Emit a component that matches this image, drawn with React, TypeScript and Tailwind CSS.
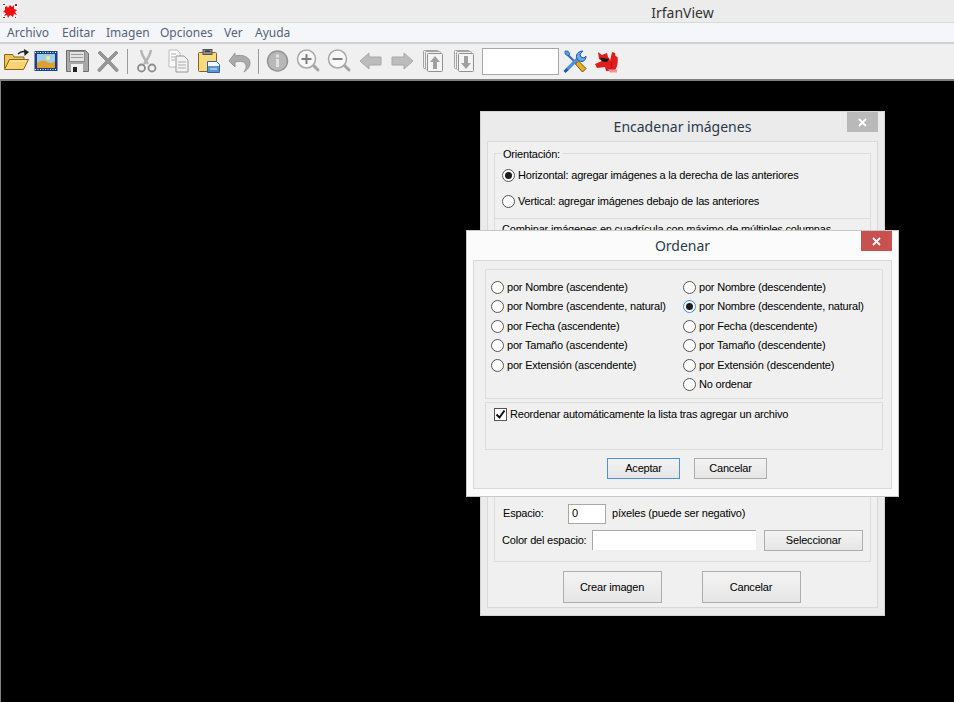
const SANS = "font-['Liberation_Sans',Arial,sans-serif]";

function Splat() {
  return (
    <svg width="16" height="16" viewBox="0 0 16 16">
      <rect width="16" height="16" fill="#f6f0f0" />
      <path d="M3 4 5 3 6 5 8 2 10 4 12 2 12 6 15 7 13 9 15 12 12 11 11 14 8 12 6 15 5 12 2 13 4 10 1 9 3 7Z" fill="#f01010" />
      <path d="M1 1h2v1H1zM13 1h2v2h-2zM1 14h2v1H1zM13 14h1v1h-1z" fill="#444" />
    </svg>
  );
}

const icons: Record<string, React.ReactNode> = {
  open: (
    <>
      <path d="M1.500 20V6.500h8l1.500 2.500h10v3H7L3 21Z" fill="#eec65e" stroke="#8a6414" />
      <path d="M6.500 11.500H25.500l-5 10H1.500Z" fill="#f8d273" stroke="#8a6414" />
      <path d="M7 13h16" stroke="#fff3c0" />
      <path d="M15 6c2-2 5-3 8-2" fill="none" stroke="#222" strokeWidth="1.500" />
      <path d="m21 1 5 3-4.500 4Z" fill="#222" />
    </>
  ),
  film: (
    <>
      <rect x="0.500" y="3" width="23" height="20" fill="#1d3f86" />
      <rect x="3" y="6" width="18" height="14" fill="#9fd0ea" />
      <path d="M3 15c4-3 7-3 10-1s5 1 8-1v7H3Z" fill="#e0a030" />
      <circle cx="14" cy="10" r="2" fill="#ffe98a" />
      <path d="M1 4.500h22M1 21.500h22" stroke="#fff" strokeDasharray="1 1.500" />
    </>
  ),
  save: (
    <>
      <path d="M1.500 2.500h19l3 3v18h-22Z" fill="#a8a8a8" stroke="#6e6e6e" />
      <rect x="4.500" y="3.500" width="15" height="10" fill="#e4e4e4" stroke="#8a8a8a" />
      <path d="M6 6.500h12M6 9.500h12" stroke="#9a9a9a" />
      <rect x="6" y="16" width="12" height="8" fill="#efefef" />
      <rect x="8" y="19" width="4" height="5" fill="#222" />
    </>
  ),
  del: (
    <path d="m2 5 2-2 8 8 8-8 2 2-8 8 8.500 9-2 2-8.500-9-8.500 9-2-2 8.500-9Z" fill="#979797" stroke="#7c7c7c" strokeWidth=".7" />
  ),
  cut: (
    <>
      <path d="M7 2c1 6 4 10 7 14M17 2c-1 6-4 10-7 14" stroke="#b4b4b4" strokeWidth="2.400" fill="none" />
      <circle cx="7.500" cy="20" r="3.500" fill="none" stroke="#8c8c8c" strokeWidth="1.800" />
      <circle cx="18" cy="20" r="3.500" fill="none" stroke="#8c8c8c" strokeWidth="1.800" />
    </>
  ),
  copy: (
    <>
      <path d="M4 2h8l3 3v14H4Z" fill="#fafafa" stroke="#bcbcbc" />
      <path d="M11 8h8l4 4v12H11Z" fill="#f2f2f2" stroke="#969696" />
      <path d="M6 6h5M6 9h4M6 12h4M13 14h8M13 17h8M13 20h8" stroke="#adadad" />
    </>
  ),
  paste: (
    <>
      <rect x="2.500" y="4.500" width="18" height="19" rx="1" fill="#f8dc7c" stroke="#8f5a2c" />
      <rect x="7" y="1.500" width="9" height="5" fill="#8a8a8a" stroke="#555" />
      <rect x="9" y="2.500" width="5" height="1.500" fill="#333" />
      <path d="M11.500 13.500h9l3 3v8h-12Z" fill="#f4f8fc" stroke="#2f62a8" />
      <path d="M12 18h11v6H12Z" fill="#5a96d2" />
      <path d="M14 21h7" stroke="#dfeefc" />
    </>
  ),
  undo: (
    <path d="M2 13 8 5v3c8-2 15 1 15 7 0 4-3 7-6 9 2-3 3-6 1-9-2-2-6-2-10-1v5Z" fill="#ababab" stroke="#979797" />
  ),
  info: (
    <>
      <circle cx="12.500" cy="13" r="10" fill="#b8b8b8" stroke="#959595" strokeWidth="1.500" />
      <rect x="11" y="11" width="3" height="8" fill="#e2e2e2" />
      <rect x="11" y="6.500" width="3" height="3" fill="#e2e2e2" />
    </>
  ),
  zoomin: (
    <>
      <path d="m17 17 5 5" stroke="#a4a4a4" strokeWidth="3" strokeLinecap="round" />
      <circle cx="10.500" cy="11" r="9" fill="#f8f8f8" stroke="#a8a8a8" strokeWidth="1.500" />
      <path d="M5.500 11h10M10.500 6v10" stroke="#7f7f7f" strokeWidth="2" />
    </>
  ),
  zoomout: (
    <>
      <path d="m17 17 5 5" stroke="#a4a4a4" strokeWidth="3" strokeLinecap="round" />
      <circle cx="10.500" cy="11" r="9" fill="#f8f8f8" stroke="#a8a8a8" strokeWidth="1.500" />
      <path d="M5.500 11h10" stroke="#7f7f7f" strokeWidth="2" />
    </>
  ),
  left: <path d="M2 13 11 5V9h12v8H11v4Z" fill="#bcbcbc" stroke="#a8a8a8" />,
  right: <path d="M24 13 15 5V9H3v8h12v4Z" fill="#bcbcbc" stroke="#a8a8a8" />,
  pgup: (
    <>
      <rect x="3.500" y="2.500" width="15" height="18" rx="1" fill="#f0f0f0" stroke="#a4a4a4" />
      <rect x="5.500" y="3.500" width="15" height="18" rx="1" fill="#f0f0f0" stroke="#a4a4a4" />
      <rect x="7.500" y="5.500" width="15" height="18" rx="1" fill="#f4f4f4" stroke="#909090" />
      <path d="m15 8 5 6h-3v7h-4v-7h-3Z" fill="#a0a0a0" />
    </>
  ),
  pgdn: (
    <>
      <rect x="3.500" y="2.500" width="15" height="18" rx="1" fill="#f0f0f0" stroke="#a4a4a4" />
      <rect x="5.500" y="3.500" width="15" height="18" rx="1" fill="#f0f0f0" stroke="#a4a4a4" />
      <rect x="7.500" y="5.500" width="15" height="18" rx="1" fill="#f4f4f4" stroke="#909090" />
      <path d="m15 21-5-6h3V8h4v7h3Z" fill="#a0a0a0" />
    </>
  ),
  tools: (
    <>
      <path d="M4 5 16 17" stroke="#2e6fc0" strokeWidth="2.200" fill="none" />
      <path d="M3 3h3l2 3-2 2-3-2Z" fill="#5b9ae0" stroke="#1d58a8" strokeWidth=".7" />
      <path d="M4.500 22 16 10.500" stroke="#4f8fdc" strokeWidth="3.200" fill="none" />
      <path d="M15 11c-2-4 1-8 6-8l-3 3 1 3 3 1 2-2c0 5-4 8-9 3" fill="#6aa6e8" stroke="#1d58a8" />
      <path d="m13.500 16 3-3 7.500 7.500-3.500 3.500Z" fill="#eab020" stroke="#6a5010" />
      <path d="m2.500 24 3-3" stroke="#1d58a8" strokeWidth="3" />
    </>
  ),
  devil: (
    <>
      <path d="M5 4 9 7l5-2 1 4c1 1 2 2 2 4l2-9 3 1 .5 3 2 1c1 6-1 12-3 14H13l-1-4-8 1-2-4 7-3-3-2Z" fill="#e21c1c" />
      <path d="M7 9.500 16 11l-2 3-5-.500Z" fill="#1a1a1a" />
      <path d="M15 21.500h9v3h-7Z" fill="#f09090" />
      <path d="M18 14c1 2 1 4 0 6" stroke="#a80f0f" fill="none" />
    </>
  ),
};

function Tool({ name }: { name: string }) {
  return (
    <div className="flex h-[34px] w-[31px] shrink-0 items-center justify-center">
      <svg width="26" height="26" viewBox="0 0 26 26">
        {icons[name]}
      </svg>
    </div>
  );
}

function Sep() {
  return (
    <div className="flex h-[34px] w-[7px] shrink-0 items-center justify-center">
      <div className="h-[25px] w-[1px] bg-[#9a9a9a]" />
    </div>
  );
}

function Radio({ label, checked, focus }: { label: string; checked?: boolean; focus?: boolean }) {
  return (
    <div className="flex items-center gap-[3px] text-[11px] leading-none tracking-[-0.2px] text-black">
      <span
        className={`flex h-[13px] w-[13px] shrink-0 items-center justify-center rounded-full border bg-white ${
          focus ? "border-[#3d8fe8]" : "border-[#555]"
        }`}
      >
        {checked && <span className="h-[7px] w-[7px] rounded-full bg-[#1c1c1c]" />}
      </span>
      <span className="whitespace-nowrap">{label}</span>
    </div>
  );
}

function Button({ label, className }: { label: string; className: string }) {
  return (
    <div
      className={`flex items-center justify-center border bg-gradient-to-b from-[#f3f3f3] to-[#e6e6e6] text-[11px] tracking-[-0.2px] text-black ${className}`}
    >
      {label}
    </div>
  );
}

export default function App() {
  return (
    <div className={`relative flex h-[702px] w-[954px] flex-col overflow-hidden bg-black ${SANS}`}>
      {/* Title bar */}
      <div className="relative flex h-[23px] shrink-0 items-center justify-center border-b border-[#d9d9d9] bg-[#ececec] pl-[411px] pt-[2px] font-['Noto_Sans',sans-serif] text-[14px] text-[#333]">
        <div className="absolute left-[2px] top-[3px]">
          <Splat />
        </div>
        IrfanView
      </div>

      {/* Menu */}
      <div className="flex h-[19px] shrink-0 items-center bg-[#f5f6f9] font-['Noto_Sans',sans-serif] text-[12px] text-[#55637a]">
        <span className="ml-[7px] w-[55px]">Archivo</span>
        <span className="w-[44px]">Editar</span>
        <span className="w-[54px]">Imagen</span>
        <span className="w-[64px]">Opciones</span>
        <span className="w-[31px]">Ver</span>
        <span>Ayuda</span>
      </div>

      {/* Toolbar */}
      <div className="flex h-[39px] shrink-0 items-center border-t-2 border-b-2 border-t-[#d0d0d0] border-b-[#808080] bg-[#f0f0f0] pb-[1px]">
        <Tool name="open" />
        <Tool name="film" />
        <Tool name="save" />
        <Tool name="del" />
        <Sep />
        <Tool name="cut" />
        <Tool name="copy" />
        <Tool name="paste" />
        <Tool name="undo" />
        <Sep />
        <Tool name="info" />
        <Tool name="zoomin" />
        <Tool name="zoomout" />
        <Tool name="left" />
        <Tool name="right" />
        <Tool name="pgup" />
        <Tool name="pgdn" />
        <div className="ml-[3px] h-[27px] w-[77px] shrink-0 border border-[#a8a8a8] bg-white" />
        <Tool name="tools" />
        <Tool name="devil" />
      </div>

      <div className="flex-1 border-l border-[#808080] bg-black" />

      {/* Encadenar imágenes */}
      <div className="absolute left-[480px] top-[111px] flex h-[505px] w-[405px] flex-col border border-[#d4d4d4] bg-[#ebebeb]">
        <div className="relative flex h-[29px] shrink-0 items-center justify-center font-['Noto_Sans',sans-serif] text-[14px] text-[#2b3a4a]">
          Encadenar imágenes
          <div className="absolute right-[6px] top-0 flex h-[20px] w-[31px] items-center justify-center bg-[#b9b9b9]">
            <svg width="9" height="9" viewBox="0 0 9 9">
              <path d="m1 1 7 7M8 1 1 8" stroke="#fff" strokeWidth="1.800" />
            </svg>
          </div>
        </div>
        <div className="mx-[6px] flex flex-1 flex-col border border-[#d9d9d9] bg-[#f0f0f0] px-[6px] pt-[11px]">
          <div className="relative h-[66px] shrink-0 border border-[#dcdcdc] px-[7px] pt-[15px]">
            <span className="absolute left-[6px] top-[-7px] bg-[#f0f0f0] px-[2px] text-[11px] leading-[14px] tracking-[-0.2px] text-black">Orientación:</span>
            <div className="flex flex-col gap-[13px]">
              <Radio label="Horizontal: agregar imágenes a la derecha de las anteriores" checked />
              <Radio label="Vertical: agregar imágenes debajo de las anteriores" />
            </div>
          </div>
          <div className="h-[343px] shrink-0 border border-t-0 border-[#dcdcdc] px-[7px] pt-[2px] text-[11px] tracking-[-0.2px] text-black">
            <div className="whitespace-nowrap">Combinar imágenes en cuadrícula con máximo de múltiples columnas</div>
            <div className="mt-[266px] flex items-center">
              <span className="ml-[1px] w-[65px]">Espacio:</span>
              <span className="flex h-[20px] w-[38px] items-center border border-[#a8a8a8] bg-white pl-[3px]">0</span>
              <span className="ml-[6px]">píxeles (puede ser negativo)</span>
            </div>
            <div className="mt-[6px] flex items-center">
              <span className="w-[90px] whitespace-nowrap">Color del espacio:</span>
              <span className="h-[20px] w-[164px] border-t border-l border-[#a8a8a8] bg-white" />
              <Button label="Seleccionar" className="ml-[8px] h-[21px] w-[99px] border-[#adadad]" />
            </div>
          </div>
          <div className="flex justify-center gap-[40px] pt-[9px] pr-[2px]">
            <Button label="Crear imagen" className="h-[32px] w-[99px] border-[#adadad]" />
            <Button label="Cancelar" className="h-[32px] w-[99px] border-[#adadad]" />
          </div>
        </div>
        <div className="h-[7px] shrink-0" />
      </div>

      {/* Ordenar */}
      <div className="absolute left-[466px] top-[230px] flex h-[267px] w-[433px] flex-col border border-[#c8c8c8] bg-[#fbfbfb]">
        <div className="relative flex h-[29px] shrink-0 items-center justify-center font-['Noto_Sans',sans-serif] text-[14px] text-[#2b3a4a]">
          Ordenar
          <div className="absolute right-[6px] top-0 flex h-[20px] w-[31px] items-center justify-center bg-[#c75050]">
            <svg width="9" height="9" viewBox="0 0 9 9">
              <path d="m1 1 7 7M8 1 1 8" stroke="#fff" strokeWidth="1.800" />
            </svg>
          </div>
        </div>
        <div className="mx-[6px] mb-[7px] flex flex-1 flex-col border border-[#d9d9d9] bg-[#f0f0f0] pl-[11px] pr-[8px] pt-[8px]">
          <div className="grid h-[130px] shrink-0 grid-cols-[192px_1fr] border border-[#dcdcdc] pl-[5px] pt-[10.500px]">
            <div className="flex flex-col gap-[6.500px] [&>*]:h-[13px]">
              <Radio label="por Nombre (ascendente)" />
              <Radio label="por Nombre (ascendente, natural)" />
              <Radio label="por Fecha (ascendente)" />
              <Radio label="por Tamaño (ascendente)" />
              <Radio label="por Extensión (ascendente)" />
            </div>
            <div className="flex flex-col gap-[6.500px] [&>*]:h-[13px]">
              <Radio label="por Nombre (descendente)" />
              <Radio label="por Nombre (descendente, natural)" checked focus />
              <Radio label="por Fecha (descendente)" />
              <Radio label="por Tamaño (descendente)" />
              <Radio label="por Extensión (descendente)" />
              <Radio label="No ordenar" />
            </div>
          </div>
          <div className="mt-[3px] flex h-[48px] shrink-0 items-start border border-[#dcdcdc] pl-[8px] pt-[5px] text-[11px] leading-[13px] tracking-[-0.2px] text-black">
            <span className="mr-[3px] flex h-[13px] w-[13px] items-center justify-center border border-[#555] bg-white">
              <svg width="11" height="11" viewBox="0 0 11 11">
                <path d="m1.500 5.500 3 3 5-7" fill="none" stroke="#111" strokeWidth="2" />
              </svg>
            </span>
            Reordenar automáticamente la lista tras agregar un archivo
          </div>
          <div className="flex justify-center gap-[14px] pl-[6px] pt-[8px]">
            <Button label="Aceptar" className="h-[21px] w-[73px] border-[#4a90e2]" />
            <Button label="Cancelar" className="h-[21px] w-[73px] border-[#adadad]" />
          </div>
        </div>
      </div>
    </div>
  );
}
